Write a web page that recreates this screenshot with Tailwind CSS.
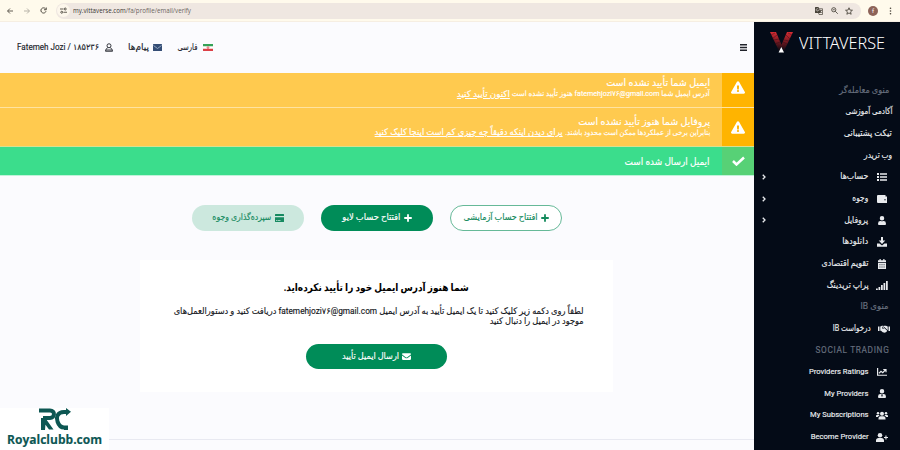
<!DOCTYPE html>
<html lang="fa">
<head>
<meta charset="utf-8">
<title>Vittaverse</title>
<script src="https://cdn.jsdelivr.net/npm/@tailwindcss/browser@4"></script>
</head>
<body class="w-[900px] h-[450px] overflow-hidden flex flex-col bg-[#fbfbfe] font-[Roboto,'DejaVu_Sans',sans-serif] text-[9px] text-[#15171c]">
<svg class="hidden">
  <symbol id="warn" viewBox="0 0 576 512"><path fill="currentColor" d="M569.5 440c18.500 32-4.700 72-41.600 72H48c-37 0-60-40-41.600-72L246.400 24c18.500-32 64.700-32 83.200 0zM288 354a46 46 0 1 0 0 92 46 46 0 0 0 0-92zm-43.700-165.300 7.400 136c.4 6.400 5.600 11.300 12 11.300h48.600c6.400 0 11.600-5 12-11.300l7.400-136c.4-6.900-5.100-12.700-12-12.700h-63.400c-6.900 0-12.400 5.800-12 12.700z"/></symbol>
  <symbol id="user" viewBox="0 0 448 512"><path fill="currentColor" d="M224 256a128 128 0 1 0 0-256 128 128 0 0 0 0 256zm90 32h-17a174 174 0 0 1-146 0h-17A134 134 0 0 0 0 422v42c0 26 21 48 48 48h352c27 0 48-22 48-48v-42a134 134 0 0 0-134-134z"/></symbol>
  <symbol id="mail" viewBox="0 0 512 384"><path fill="currentColor" d="M48 0h416c27 0 48 20 48 46 0 22-14 40-30 52L300 236c-28 21-60 21-88 0L30 98C14 86 0 68 0 46 0 20 21 0 48 0zM0 130l190 142c40 30 92 30 132 0l190-142v206c0 27-21 48-48 48H48c-27 0-48-21-48-48z"/></symbol>
  <symbol id="plus" viewBox="0 0 16 16"><path fill="currentColor" d="M6.200.5h3.600v5.700h5.700v3.600H9.800v5.700H6.200V9.800H.5V6.200h5.700z"/></symbol>
  <symbol id="chev" viewBox="0 0 8 12"><path fill="none" stroke="currentColor" stroke-width="2.600" d="m1.500 1.500 4.500 4.500-4.500 4.500"/></symbol>
</svg>

<header class="h-[22px] shrink-0 flex items-center bg-[#fffaec] border-b border-[#f6eee2] text-[#474239]">
  <svg class="ml-[7px] w-[6px] h-[6px]" viewBox="0 0 12 12" fill="none" stroke="currentColor" stroke-width="1.700"><path d="M12 6H1.500M6 1 1 6l5 5"/></svg>
  <svg class="ml-[11px] w-[6px] h-[6px] text-[#aaa69c]" viewBox="0 0 12 12" fill="none" stroke="currentColor" stroke-width="1.700"><path d="M0 6h10.500M6 1l5 5-5 5"/></svg>
  <svg class="ml-[10px] w-[7px] h-[7px]" viewBox="0 0 14 14" fill="none" stroke="currentColor" stroke-width="1.900"><path d="M12 8.500A5.200 5.200 0 1 1 11 3.500M12.500 1v4.500H8"/></svg>
  <div class="ml-[9px] w-[805px] h-[16px] rounded-full bg-[#efe7e1] flex items-center pl-[1px]">
    <span class="w-[13px] h-[13px] rounded-full bg-[#fdf7ec] flex items-center justify-center">
      <svg class="w-[7px] h-[7px]" viewBox="0 0 14 14" fill="none" stroke="currentColor" stroke-width="1.700"><path d="M0 4h7M7 10.500h7"/><circle cx="10.500" cy="4" r="2"/><circle cx="3.500" cy="10.500" r="2"/></svg>
    </span>
    <span class="ml-[3px] pt-[1px] whitespace-nowrap font-['Open_Sans'] text-[7px] text-[#6a645e]" data-w="118"><span class="text-[#3b3733]">my.vittaverse.com</span>/fa/profile/email/verify</span>
    <span class="ml-auto flex items-center gap-[7.500px] pr-[8px]">
      <svg class="w-[8px] h-[8px]" viewBox="0 0 16 16"><path fill="currentColor" d="M1 0h6l4.500 12H1a1 1 0 0 1-1-1V1a1 1 0 0 1 1-1z"/><path fill="none" stroke="currentColor" stroke-width="1.400" d="M8 3.500h7V15H8l-1-3M9 7h5M11.500 5.500V7c0 2-1 4-2 5M10.500 8.500l3 3.500"/><path stroke="#efe7e1" stroke-width="1.100" fill="none" d="M6.500 4A2.500 2.500 0 1 0 7 6.500H5"/></svg>
      <svg class="w-[7px] h-[7px]" viewBox="0 0 14 14" fill="none" stroke="currentColor" stroke-width="1.700"><circle cx="5.500" cy="5.500" r="4.200"/><path d="m8.500 8.500 5 5M3.500 5.500h4"/></svg>
      <svg class="w-[8px] h-[8px]" viewBox="0 0 16 16" fill="none" stroke="currentColor" stroke-width="1.700"><path d="m8 1.500 1.900 4.600 5 .4-3.800 3.200 1.200 4.800L8 11.900l-4.300 2.600 1.200-4.800L1.100 6.500l5-.4z"/></svg>
    </span>
  </div>
  <span class="ml-[7px] w-[10px] h-[10px] rounded-full bg-[#8d6358] text-white text-[6px] leading-[10px] text-center">f</span>
  <svg class="ml-[10.500px] w-[3px] h-[8px]" viewBox="0 0 3 8" fill="currentColor"><circle cx="1.500" cy="1.200" r=".8"/><circle cx="1.500" cy="4" r=".8"/><circle cx="1.500" cy="6.800" r=".8"/></svg>
</header>

<div class="flex h-[428px] [-webkit-text-stroke:0.150px]">
  <main class="w-[754px] shrink-0 flex flex-col">
    <nav class="h-[51px] shrink-0 flex items-center pl-[17px] text-[#20222a]">
      <span dir="ltr" class="whitespace-nowrap" data-w="82">Fatemeh Jozi / ۱۸۵۲۳۶</span>
      <svg class="ml-[5.500px] mr-[16px] w-[8px] h-[9px]" viewBox="0 0 16 18" fill="none" stroke="currentColor" stroke-width="1.800"><circle cx="8" cy="5.500" r="4"/><path d="M5.500 9.500C3 10.500 1.500 12 1 16.500h14c-.5-4.500-2-6-4.500-7M2 14h12"/></svg>
      <span dir="rtl" class="whitespace-nowrap" data-w="21">پیام‌ها</span>
      <svg class="ml-[3.500px] mr-[15.500px] w-[9px] h-[7px]" viewBox="0 0 18 14"><rect width="18" height="14" rx="1" fill="#344d75"/><path d="m1 3 8 6 8-6" fill="none" stroke="#a9bbd3" stroke-width="1.600"/></svg>
      <span dir="rtl" class="whitespace-nowrap" data-w="20">فارسی</span>
      <svg class="ml-[5.500px] w-[10px] h-[7px]" viewBox="0 0 20 14"><path fill="#fff" d="M0 0h20v14H0z"/><path fill="#35a257" d="M0 0h20v4.500H0z"/><path fill="#dc4047" d="M0 9.500h20V14H0z"/><path stroke="#dc4047" stroke-width="1.300" fill="none" d="M10 4.500v5M8.500 5.500c-.6 2 0 3 1.500 3.500 1.500-.5 2.100-1.500 1.500-3.500"/></svg>
      <svg class="ml-auto mr-[7px] w-[7px] h-[7px]" viewBox="0 0 8 7" preserveAspectRatio="none" stroke="#20222a" stroke-width="1.400"><path d="M0 .8h8M0 3.500h8M0 6.200h8"/></svg>
    </nav>

    <section dir="rtl" class="shrink-0 text-white">
      <div class="h-[35px] flex bg-[#ffca4f] border-b border-[#ffe3a0]">
        <div class="w-[32px] bg-[#ffb400] flex items-center justify-center pb-[5px]"><svg class="w-[14px] h-[13px]"><use href="#warn"/></svg></div>
        <div class="pr-[12px] pt-[4px] whitespace-nowrap">
          <div class="h-[11px] leading-[11px] text-[10px] flex"><span data-w="104">ایمیل شما تأیید نشده است</span></div>
          <div class="h-[11px] leading-[10px] flex items-center gap-[2px]"><span class="text-[7.500px]" data-w="198">آدرس ایمیل شما <bdi>fatemehjozi۷۶@gmail.com</bdi> هنوز تأیید نشده است</span><span class="underline underline-offset-1" data-w="53">اکنون تأیید کنید</span></div>
        </div>
      </div>
      <div class="h-[39px] flex bg-[#ffca4f] border-b border-[#d9df90]">
        <div class="w-[32px] bg-[#ffb400] flex items-center justify-center"><svg class="w-[14px] h-[13px]"><use href="#warn"/></svg></div>
        <div class="pr-[12px] pt-[8px] whitespace-nowrap">
          <div class="h-[11px] leading-[11px] text-[10px] flex"><span data-w="132">پروفایل شما هنوز تأیید نشده است</span></div>
          <div class="h-[11px] leading-[11px] flex items-center gap-[2px]"><span class="text-[7.500px]" data-w="145">بنابراین برخی از عملکردها ممکن است محدود باشند.</span><span class="underline underline-offset-1" data-w="188">برای دیدن اینکه دقیقاً چه چیزی کم است اینجا کلیک کنید</span></div>
        </div>
      </div>
      <div class="h-[29px] flex items-center bg-[#3bdd8c] border-b border-[#c0f3da]">
        <div class="w-[32px] h-full bg-[#57d176] flex items-center justify-center"><svg class="w-[13px] h-[10px]" viewBox="0 0 26 20"><path d="m2 10 7 7L24 3" fill="none" stroke="#fff" stroke-width="5"/></svg></div>
        <div class="pr-[12px] whitespace-nowrap flex text-[10px]"><span data-w="85">ایمیل ارسال شده است</span></div>
      </div>
    </section>

    <div dir="rtl" class="mt-[29px] mr-[192px] flex gap-[17px] whitespace-nowrap">
      <button class="w-[112px] h-[26px] rounded-full border border-[#66b998] bg-white text-[#138a5c] flex items-center justify-center gap-[3px]"><svg class="w-[8px] h-[8px]"><use href="#plus"/></svg><span data-w="74">افتتاح حساب آزمایشی</span></button>
      <button class="w-[112px] h-[26px] rounded-full bg-[#008c58] text-white flex items-center justify-center gap-[3px]"><svg class="w-[8px] h-[8px]"><use href="#plus"/></svg><span data-w="58">افتتاح حساب لایو</span></button>
      <button class="w-[112px] h-[26px] rounded-full bg-[#cce8de] text-[#168a61] flex items-center justify-center gap-[3px]"><svg class="w-[9px] h-[8px]" viewBox="0 0 18 16" fill="currentColor"><path d="M1 0h16a1 1 0 0 1 1 1v3H0V1a1 1 0 0 1 1-1zM0 6.500h18V15a1 1 0 0 1-1 1H1a1 1 0 0 1-1-1z"/><path fill="#cce8de" d="M2 12h3v1.500H2zM6 12h5v1.500H6z"/></svg><span data-w="59">سپرده‌گذاری وجوه</span></button>
    </div>

    <article dir="rtl" class="self-end mt-[29px] mr-[141px] w-[473px] h-[132px] bg-white flex flex-col items-center whitespace-nowrap">
      <h1 class="mt-[19px] h-[18px] leading-[18px] font-bold text-[10.500px] text-black flex [-webkit-text-stroke:0]"><span data-w="185">شما هنوز آدرس ایمیل خود را تأیید نکرده‌اید.</span></h1>
      <p class="mt-[9px] w-full pr-[29px] leading-[10px]"><span class="flex h-[10px]"><span data-w="410">لطفاً روی دکمه زیر کلیک کنید تا یک ایمیل تأیید به آدرس ایمیل <bdi>fatemehjozi۷۶@gmail.com</bdi> دریافت کنید و دستورالعمل‌های</span></span><span class="flex h-[10px]"><span data-w="94">موجود در ایمیل را دنبال کنید</span></span></p>
      <button class="mt-[18px] w-[141px] h-[25px] rounded-full bg-[#008c58] text-white flex items-center justify-center gap-[3px]"><svg class="w-[9px] h-[7px]"><use href="#mail"/></svg><span data-w="57">ارسال ایمیل تأیید</span></button>
    </article>

    <footer class="mt-[16px] h-[42px] flex">
      <div class="w-[109px] bg-white flex flex-col items-center text-[#0d5753]">
        <svg class="w-[32px] h-[23px]" viewBox="0 0 32 23" fill="none" stroke="currentColor" stroke-width="4"><path d="M0 2.500h11c5.500 0 5 7.500 0 7.500H4"/><path d="m7 11 7.500 10.500H10L3 12zM2 10h5l-1 12H2z" fill="currentColor" stroke="none"/><path d="M29 4h-4c-7 0-8 6-6.500 9.500 1.500 4.500 3.500 6 6.500 6"/><path fill="currentColor" stroke="none" d="m27 0 5 3.800-5 4.200zM25 17.500h4V22h-4z"/></svg>
        <span class="h-[16px] leading-[16px] font-['Open_Sans'] text-[13px] font-bold whitespace-nowrap" data-w="95">Royalclubb.com</span>
      </div>
      <div class="flex-1 mt-[31px] border-t border-[#e8e9f1]"></div>
    </footer>
  </main>

  <aside dir="rtl" class="w-[146px] bg-[#040b17] text-[#e9ebee] whitespace-nowrap">
    <div dir="ltr" class="h-[57.700px] pt-[10px] pl-[15px] flex items-start [-webkit-text-stroke:0]">
      <svg class="w-[25px] h-[22px]" viewBox="0 0 25 22"><defs><linearGradient id="g" x2="0" y2="1"><stop stop-color="#d62c33"/><stop offset=".4" stop-color="#8d1d25"/><stop offset=".9" stop-color="#1c0c14"/></linearGradient></defs><path fill="url(#g)" d="M1 0h6l6 14-3 5zM18 0h6l-9 19-3-5z"/><path stroke="#250d15" stroke-width=".4" fill="none" d="m2 3 4-2M3 7l5-4M5 8l5-1M6 12l5-2M23 3l-4-2M21 7l-4-4M20 9l-5-1M18 12l-4-2"/><path fill="#fff" d="m12.300 15 2.700 5.500H9.600z"/></svg>
      <span class="ml-[4.500px] leading-[22px] font-['Noto_Sans'] text-[16px] font-light text-white" data-w="86">VITTAVERSE</span>
    </div>
    <div class="h-[21.670px] flex items-center pr-[11px] text-[#68707f]"><span data-w="50">منوی معامله‌گر</span></div>
    <div class="h-[21.670px] flex items-center pr-[8px]"><span data-w="47">آکادمی آموزشی</span></div>
    <div class="h-[21.670px] flex items-center pr-[8px]"><span data-w="48">تیکت پشتیبانی</span></div>
    <div class="h-[21.670px] flex items-center pr-[8px]"><span data-w="28">وب تریدر</span></div>
    <div class="h-[21.670px] flex items-center pr-[13px]"><svg class="w-[10px] h-[8px] ml-[8.500px]" viewBox="0 0 20 16" fill="currentColor"><path d="M0 0h4v4H0zM6 .5h14v3H6zM0 6h4v4H0zM6 6.500h14v3H6zM0 12h4v4H0zM6 12.500h14v3H6z"/></svg><span data-w="28">حساب‌ها</span><svg class="mr-auto ml-[8px] w-[4px] h-[6px]"><use href="#chev"/></svg></div>
    <div class="h-[21.670px] flex items-center pr-[13px]"><svg class="w-[10px] h-[8px] ml-[8.500px]" viewBox="0 0 20 16" fill="currentColor"><path d="M2 0h15v3h3v13H2a2 2 0 0 1-2-2V2a2 2 0 0 1 2-2z"/><circle cx="16" cy="9.500" r="1.300" fill="#040b17"/></svg><span data-w="16">وجوه</span><svg class="mr-auto ml-[8px] w-[4px] h-[6px]"><use href="#chev"/></svg></div>
    <div class="h-[21.670px] flex items-center pr-[13px]"><svg class="w-[10px] h-[9px] ml-[8.500px]"><use href="#user"/></svg><span data-w="24">پروفایل</span><svg class="mr-auto ml-[8px] w-[4px] h-[6px]"><use href="#chev"/></svg></div>
    <div class="h-[21.670px] flex items-center pr-[13px]"><svg class="w-[10px] h-[10px] ml-[8.500px]" viewBox="0 0 20 20" fill="currentColor"><path d="M8 0h4v7h4.500L10 14 3.500 7H8zM0 13h5l5 4 5-4h5v6.500H0z"/></svg><span data-w="26">دانلودها</span></div>
    <div class="h-[21.670px] flex items-center pr-[13px]"><svg class="w-[10px] h-[10px] ml-[8.500px]" viewBox="0 0 20 20"><path fill="currentColor" d="M5 0h2.500v2.500h5V0H15v2.500h3V6H2V2.500h3zM2 7.500h16V20H2z"/><path fill="#040b17" d="M5 10.500h1.800v1.800H5zM9.100 10.500h1.800v1.800H9.100zM13.200 10.500H15v1.800h-1.800zM5 15h1.800v1.800H5zM9.100 15h1.800v1.800H9.100zM13.200 15H15v1.800h-1.800z"/></svg><span data-w="47">تقویم اقتصادی</span></div>
    <div class="h-[21.670px] flex items-center pr-[12px]"><svg class="w-[12px] h-[9px] ml-[7.500px]" viewBox="0 0 24 18" fill="currentColor"><path d="M0 15h3.500v3H0zM5 12h3.500v6H5zM10 8h3.500v10H10zM15 4h3.500v14H15zM20 0h3.500v18H20z"/></svg><span data-w="42">پراپ تریدینگ</span></div>
    <div class="h-[21.670px] flex items-center pr-[11px] text-[#68707f]"><span data-w="28">منوی IB</span></div>
    <div class="h-[21.670px] flex items-center pr-[10px]"><svg class="w-[12px] h-[8px] ml-[7px]" viewBox="0 0 24 16"><path fill="currentColor" d="M0 3h3v9H0zM21 3h3v9h-3zM4.500 3 8 1.500h3L8 5c0 3 3 3 4.500 1l6 5.500-2 2.500-3 1.500-4-1-3.500-3H4.500zM19.500 3 16 1.500h-4L9 5.500c1 1 2 .5 3.500-1.500l7 6.500z"/></svg><span data-w="38">درخواست IB</span></div>
    <div class="h-[21.670px] flex items-center pr-[11px] text-[#68707f] tracking-[0.080em]"><span data-w="74">SOCIAL TRADING</span></div>
    <div class="h-[21.670px] flex items-center pr-[13px] text-[8px]"><svg class="w-[10px] h-[8px] ml-[8.500px]" viewBox="0 0 20 16" fill="none" stroke="currentColor" stroke-width="2.400"><path d="M1.200 0v14.500H20M4 10.500l4-4 3.500 3 5-5.500M12.500 3H18v5.500"/></svg><span data-w="59.500">Providers Ratings</span></div>
    <div class="h-[21.670px] flex items-center pr-[13px] text-[8px]"><svg class="w-[10px] h-[9px] ml-[8.500px]" viewBox="0 0 448 512"><use href="#user" width="448" height="512"/><path fill="#040b17" d="m175 300 49 45-35 130zM273 300l-49 45 35 130z"/></svg><span data-w="44">My Providers</span></div>
    <div class="h-[21.670px] flex items-center pr-[12px] text-[8px]"><svg class="w-[12px] h-[9px] ml-[7.500px]" viewBox="0 0 24 18" fill="currentColor"><circle cx="12" cy="5.500" r="4"/><circle cx="4" cy="4.500" r="2.500"/><circle cx="20" cy="4.500" r="2.500"/><path d="M5 17v-2c0-3 2-4.500 4-4.500h6c2 0 4 1.500 4 4.500v2zM0 12v-2c0-1.500 1-2 2-2h4l1 1.500c-2 .5-3 1.500-3.300 2.500zM24 12v-2c0-1.500-1-2-2-2h-4l-1 1.500c2 .5 3 1.500 3.300 2.500z"/></svg><span data-w="58.500">My Subscriptions</span></div>
    <div class="h-[21.670px] flex items-center pr-[12px] text-[8px]"><svg class="w-[12px] h-[9px] ml-[7.500px]" viewBox="0 0 24 18" fill="currentColor"><circle cx="8" cy="4.500" r="4.500"/><path d="M0 18v-3c0-3 2-4.800 5-4.800h6c3 0 5 1.800 5 4.800v3zM18.800 5H21v3h3v2.200h-3v3h-2.200v-3H16V8h2.800z"/></svg><span data-w="58">Become Provider</span></div>
  </aside>
</div>
<script>
  // Condense or widen every label so that it fills its intended width.
  function fitLabels() {
    document.querySelectorAll('[data-w]').forEach(function (el) {
      var want = parseFloat(el.dataset.w);
      var rtl = getComputedStyle(el).direction === 'rtl';
      el.style.display = 'inline-block';
      el.style.flex = 'none';
      el.style.transform = 'none';
      el.style.width = 'max-content';
      var natural = el.getBoundingClientRect().width;
      el.style[rtl ? 'marginLeft' : 'marginRight'] = (want - natural) + 'px';
      el.style.transformOrigin = rtl ? 'right center' : 'left center';
      el.style.transform = 'scaleX(' + want / natural + ')';
    });
  }
  fitLabels();
  window.addEventListener('load', fitLabels);
  document.fonts.ready.then(fitLabels);
  [0, 30, 100, 250].forEach(function (ms) { setTimeout(fitLabels, ms); });
  new MutationObserver(fitLabels).observe(document.head, { childList: true, subtree: true });
</script>
</body>
</html>
